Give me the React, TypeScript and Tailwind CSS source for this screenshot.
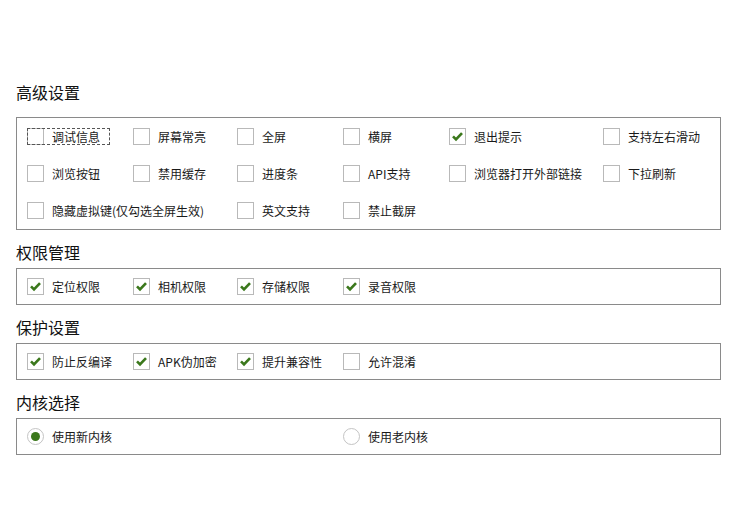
import type { ReactNode } from "react";

const FONT = { fontFamily: '"Microsoft YaHei", "Noto Sans CJK SC", "Noto Sans", sans-serif' };

function Check() {
  return (
    <svg viewBox="0 0 17 17" className="h-[17px] w-[17px]" aria-hidden>
      <path d="M3.4 8.4 L6.8 11.8 L13.6 4.6" fill="none" stroke="#3b781c" strokeWidth="3" strokeLinecap="butt" strokeLinejoin="miter" />
    </svg>
  );
}

function Box({ checked }: { checked?: boolean }) {
  return (
    <span className="flex h-[17px] w-[17px] flex-none items-center justify-center border border-[#b9b9b9] bg-white">
      {checked && <Check />}
    </span>
  );
}

function Item({
  label,
  checked,
  w,
  focus,
}: {
  label: string;
  checked?: boolean;
  w: string;
  focus?: boolean;
}) {
  return (
    <div className={`flex ${w} flex-none items-center`}>
      <div
        className={`flex h-[17px] items-center gap-2 ${
          focus ? "pr-[10px] outline-1 -outline-offset-1 outline-dashed outline-[#555]" : ""
        }`}
      >
        <Box checked={checked} />
        <span className="text-[12px] leading-none text-[#1a1a1a]">{label}</span>
      </div>
    </div>
  );
}

function Radio({ label, on, w }: { label: string; on?: boolean; w: string }) {
  return (
    <div className={`flex ${w} flex-none items-center gap-2`}>
      <span className="flex h-[17px] w-[17px] flex-none items-center justify-center rounded-full border border-[#c4c4c4] bg-white">
        {on && <span className="h-[9px] w-[9px] rounded-full bg-[#3b781c]" />}
      </span>
      <span className="text-[12px] leading-none text-[#1a1a1a]">{label}</span>
    </div>
  );
}

function Section({ title, children, first }: { title: string; children: ReactNode; first?: boolean }) {
  return (
    <section className={first ? "" : "mt-[10px]"}>
      <h2 className={`text-[16px] leading-[24px] text-[#111] ${first ? "mb-[13px]" : "mb-[4px]"}`}>{title}</h2>
      <div className="border border-[#8a8a8a] px-[10px] py-[9px]">{children}</div>
    </section>
  );
}

export default function App() {
  return (
    <div className="min-h-[510px] bg-white pl-4 pr-[11px] pt-[80px]" style={FONT}>
      <Section title="高级设置" first>
        <div className="flex flex-col gap-y-[20px] py-px">
          <div className="flex">
            <Item w="w-[106px]" label="调试信息" focus />
            <Item w="w-[104px]" label="屏幕常亮" />
            <Item w="w-[106px]" label="全屏" />
            <Item w="w-[106px]" label="横屏" />
            <Item w="w-[154px]" label="退出提示" checked />
            <Item w="w-auto" label="支持左右滑动" />
          </div>
          <div className="flex">
            <Item w="w-[106px]" label="浏览按钮" />
            <Item w="w-[104px]" label="禁用缓存" />
            <Item w="w-[106px]" label="进度条" />
            <Item w="w-[106px]" label="API支持" />
            <Item w="w-[154px]" label="浏览器打开外部链接" />
            <Item w="w-auto" label="下拉刷新" />
          </div>
          <div className="flex">
            <Item w="w-[210px]" label="隐藏虚拟键(仅勾选全屏生效)" />
            <Item w="w-[106px]" label="英文支持" />
            <Item w="w-[106px]" label="禁止截屏" />
          </div>
        </div>
      </Section>

      <Section title="权限管理">
        <div className="flex">
          <Item w="w-[106px]" label="定位权限" checked />
          <Item w="w-[104px]" label="相机权限" checked />
          <Item w="w-[106px]" label="存储权限" checked />
          <Item w="w-[106px]" label="录音权限" checked />
        </div>
      </Section>

      <Section title="保护设置">
        <div className="flex">
          <Item w="w-[106px]" label="防止反编译" checked />
          <Item w="w-[104px]" label="APK伪加密" checked />
          <Item w="w-[106px]" label="提升兼容性" checked />
          <Item w="w-[106px]" label="允许混淆" />
        </div>
      </Section>

      <Section title="内核选择">
        <div className="flex">
          <Radio w="w-[316px]" label="使用新内核" on />
          <Radio w="w-auto" label="使用老内核" />
        </div>
      </Section>
    </div>
  );
}
